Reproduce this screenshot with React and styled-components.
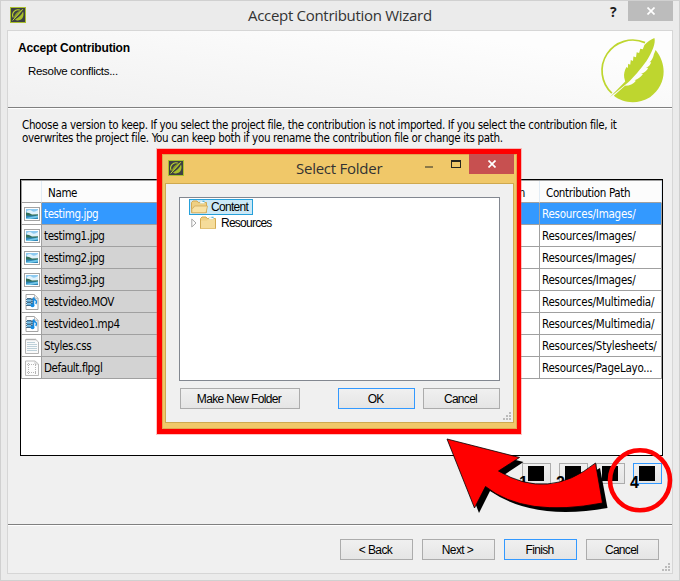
import React from "react";
import styled, { createGlobalStyle, css } from "styled-components";

const GlobalStyle = createGlobalStyle`
  * { box-sizing: border-box; }
  body { margin: 0; }
`;

const tahoma = css`
  font-family: "DejaVu Sans Condensed", "DejaVu Sans", sans-serif;
  font-stretch: condensed;
  font-size: 11.5px;
`;

const Window = styled.div`
  position: relative;
  display: flex;
  flex-direction: column;
  width: 680px;
  height: 581px;
  padding: 0 6px 6px;
  border: 1px solid #d0d0d0;
  background: #ebebeb;
  overflow: hidden;
  white-space: nowrap;
  color: #000;
  ${tahoma}
`;

const TitleBar = styled.header`
  display: flex;
  align-items: flex-start;
  flex: none;
  height: ${(p) => p.$height}px;
`;

const TitleIcon = styled.div`
  flex: none;
  width: 16px;
  height: 16px;
  margin: ${(p) => p.$top}px 0 0 3px;
`;

const Title = styled.h1`
  flex: 1;
  margin: ${(p) => p.$top}px 0 0;
  padding-left: ${(p) => p.$indent}px;
  font: 400 15px/20px "Open Sans", "Noto Sans", sans-serif;
  letter-spacing: ${(p) => p.$spacing}px;
  color: #333;
`;

const HelpMark = styled.span`
  width: 10px;
  margin: 2px 8px 0 0;
  font: 700 14px/18px "Open Sans", sans-serif;
  color: #1c1c1c;
`;

const CloseButton = styled.button`
  display: flex;
  align-items: center;
  justify-content: center;
  width: 45px;
  height: 20px;
  padding: 0 0 0 1px;
  border: 0;
  background: ${(p) => p.$color};
`;

const Client = styled.main`
  display: flex;
  flex-direction: column;
  flex: 1;
  border: 1px solid #d6d6d6;
  background: #f0f0f0;
`;

const Header = styled.section`
  display: flex;
  justify-content: space-between;
  flex: none;
  height: 77px;
  padding: 6px 7px 0 10px;
  border-bottom: 1px solid #808080;
  background: linear-gradient(172deg, #fdfdfd 0%, #f0f0f0 100%);
  background: linear-gradient(188deg, #fdfdfd 20%, #f0f0f0 100%);
`;

const HeaderText = styled.div`
  display: flex;
  flex-direction: column;
`;

const Heading = styled.h2`
  margin: 2px 0 0;
  font: 700 12px/18px "Liberation Sans", sans-serif;
  letter-spacing: -0.18px;
`;

const Subheading = styled.p`
  margin: 5px 0 0 10px;
  font: 400 11.5px/18px "Liberation Sans", sans-serif;
  letter-spacing: -0.3px;
`;

const Intro = styled.p`
  flex: none;
  height: 71px;
  margin: 0;
  padding: 10px 0 0 14px;
  border-top: 1px solid #fff;
  line-height: 13px;
  letter-spacing: ${(p) => p.$spacing}px;
`;

const FileTable = styled.div`
  flex: none;
  width: 643px;
  height: 277px;
  margin-left: 12px;
  border: 1px solid #000;
  background: #fff;
`;

const Grid = styled.div`
  display: grid;
  border-top: 1px solid #a0a0a0;
  border-left: 1px solid #a0a0a0;
`;

const GridRow = styled.div`
  display: grid;
  grid-template-columns: 20px 318px 180px 122px;
  height: 22px;
  color: ${(p) => (p.$selected ? "#fff" : "#000")};
  background: ${(p) => (p.$selected ? "#3399ff" : "#fff")};
`;

const Cell = styled.div`
  display: flex;
  align-items: center;
  padding: 1px 0 0 ${(p) => p.$pad ?? 2}px;
  border-right: 1px solid #a0a0a0;
  border-bottom: 1px solid #a0a0a0;
  background: ${(p) => p.$bg || "transparent"};
  letter-spacing: ${(p) => p.$spacing || 0}px;
`;

const HeadCell = styled(Cell)`
  padding: 2px ${(p) => (p.$end ? 14 : 0)}px 0 6px;
  justify-content: ${(p) => (p.$end ? "flex-end" : "flex-start")};
  border-right-color: #e2ecf5;
  background: #fcfcfc;
  letter-spacing: -0.35px;
`;

const IconCell = styled(Cell)`
  padding: 0;
  justify-content: center;
  background: #fff;
`;

const Steps = styled.div`
  display: flex;
  flex: none;
  gap: 8px;
  height: 68px;
  padding: 7px 0 0 514px;
`;

const Step = styled.div`
  position: relative;
  width: 29px;
  height: 21px;
  padding: 2px 0 0 5px;
  border: 1px solid ${(p) => (p.$active ? "#3399ff" : "#acacac")};
  background: linear-gradient(#f0f0f0, #e5e5e5);
`;

const StepSwatch = styled.div`
  width: 16px;
  height: 15px;
  background: #000;
`;

const StepNumber = styled.span`
  position: absolute;
  left: -4px;
  top: 10px;
  font: 700 16px/18px "Liberation Sans", sans-serif;
`;

const Footer = styled.footer`
  display: flex;
  align-items: flex-start;
  flex: 1;
  gap: 9px;
  padding: 14px 0 0 332px;
  border-top: 1px solid #808080;
  box-shadow: inset 0 1px #fff;
`;

const Button = styled.button`
  width: ${(p) => p.$width}px;
  height: 21px;
  padding: 1px 2px 0 0;
  border: 1px solid ${(p) => (p.$primary ? "#3399ff" : "#acacac")};
  background: linear-gradient(#f0f0f0, #e5e5e5);
  color: #000;
  font: 400 12px/17px "Liberation Sans", sans-serif;
  letter-spacing: ${(p) => p.$spacing || 0}px;
`;

const GripSvg = styled.svg`
  position: absolute;
  right: ${(p) => p.$right}px;
  bottom: ${(p) => p.$bottom}px;
`;

const Dialog = styled.section`
  position: absolute;
  left: 156px;
  top: 148px;
  display: flex;
  flex-direction: column;
  width: 364px;
  height: 285px;
  padding: 0 3px 8px;
  border: 5px solid #ff0000;
  border-right-width: 4px;
  outline: 1px solid rgba(255, 80, 80, 0.35);
  background: #f0c869;
  box-shadow: inset 0 0 0 1px #e2a552;
`;

const DialogBody = styled.div`
  position: relative;
  display: flex;
  flex-direction: column;
  flex: 1;
  padding: 13px;
  border: 1px solid #cfa94f;
  background: #f0f0f0;
`;

const WindowButtons = styled.div`
  display: flex;
  align-items: flex-start;
`;

const Tree = styled.ul`
  flex: none;
  width: 321px;
  height: 184px;
  margin: 0;
  padding: 1px 0 0 9px;
  border: 1px solid #828790;
  background: #fff;
  list-style: none;
  font: 400 12px/14px "Liberation Sans", sans-serif;
`;

const TreeItem = styled.li`
  display: flex;
  align-items: center;
  width: ${(p) => (p.$open ? "64px" : "max-content")};
  height: 16px;
  gap: ${(p) => (p.$open ? 3 : 1)}px;
  padding: 0 3px 0 1px;
  border: 1px solid ${(p) => (p.$open ? "#26a0da" : "transparent")};
  background: ${(p) => (p.$open ? "#cbe8f6" : "transparent")};
`;

const TreeLabel = styled.span`
  margin-left: ${(p) => p.$gap || 0}px;
  letter-spacing: ${(p) => p.$spacing}px;
`;

const DialogActions = styled.div`
  display: flex;
  justify-content: space-between;
  padding: 7px 0 0 1px;
`;

const ButtonPair = styled.div`
  display: flex;
  gap: 8px;
`;

const Callout = styled.svg`
  position: absolute;
  left: 429px;
  top: 419px;
  pointer-events: none;
`;

function AppIcon() {
  return (
    <svg width="16" height="16" viewBox="0 0 16 16">
      <rect x=".5" y=".5" width="15" height="15" fill="#3d4043" stroke="#a9bf2c" />
      <path d="M9.8 3.1A5.3 5.3 0 0 0 3.3 10.6" fill="none" stroke="#bed62f" strokeWidth="1.1" />
      <path d="M4 10.8C4 8 7 4.5 12.5 2.2 11 6 7.5 9.6 4.6 11Z" fill="#8a9b2e" />
      <path d="M13 4.6C14.4 8 13 13.3 8 13.5 6.8 13.5 5.7 13.1 5 12.5 9 10.5 11.5 8 13 4.6Z" fill="#a9bf2c" />
      <path d="M3.6 13.6 13.3 3" stroke="#3d4043" strokeWidth=".8" />
      <path d="M2.6 13.5 12.9 2.2" stroke="#bed62f" strokeWidth="1" />
    </svg>
  );
}

function FeatherLogo() {
  return (
    <svg width="66" height="68" viewBox="0 0 66 68">
      <path d="M46 5.6A30.7 30.7 0 0 0 12.8 56.2" fill="none" stroke="#bed62f" strokeWidth="1.7" />
      <path
        d="M56.6 13C69 28 67 49 51 60.2 38 68 24 66 14.8 58.8L26 48.8C31 48.8 34 47 37 43.8L35.5 43.3C39 42.5 42 39.5 44 37L42 36.9C46 35.5 48 33.5 49.2 30.8L47 31.1C50 29.5 51.5 27.5 52.2 25L50.5 25.4C53.5 22.5 54.6 19 54.8 17.5Z"
        fill="#bed62f"
      />
      <path
        d="M55.4 1C57 6 53 15.5 47.5 24 41 33 34 41 29 45.5L10.8 60.3 26.2 44.4 25.2 40.4C24.6 37 25.6 33.5 27.5 30L28.8 31 29.2 26.8 31.2 27.8 31.8 23.1 34 24 34.4 19.4 37 20.2 37.7 15.3 40.1 16.1 41.3 11.7 43.8 12.3 45.4 8.1C48.5 4.5 52 2.3 55.4 1Z"
        fill="#bed62f"
      />
    </svg>
  );
}

function CrossIcon() {
  return (
    <svg width="8" height="8" viewBox="0 0 8 8">
      <path d="M.5.5 7.5 7.5M7.5.5.5 7.5" stroke="#fff" strokeWidth="1.7" />
    </svg>
  );
}

function ImageIcon() {
  return (
    <svg width="16" height="14" viewBox="0 0 16 14">
      <rect x=".5" y=".5" width="15" height="13" fill="#fff" stroke="#a4a4a4" />
      <path d="M2 2h12v5H2z" fill="#8dcaf1" />
      <path d="M3 4q3-2 5 0t6-1v4H3z" fill="#dff2fc" />
      <path d="M2 5.5Q5 5.6 8 7.6L14 7.2V9H2z" fill="#316f59" />
      <path d="M2 8.6h12V12H2z" fill="#2f86b8" />
      <path d="M2 11 14 8.6v2L6 12H2z" fill="#74c8e9" />
    </svg>
  );
}

function MediaIcon() {
  return (
    <svg width="14" height="16" viewBox="0 0 14 16">
      <path d="M1 .5h8.5l3.5 3.5v11.5H1z" fill="#fff" stroke="#a4a4a4" />
      <path d="M9.5.5v3.8h3.6" fill="#eee" stroke="#bbb" />
      <path d="M1 4h7v8H1z" fill="#456d8b" />
      <path d="M2 5.5h4v2H2zM2 9h4v1.8H2z" fill="#79c5ed" />
      <path d="M1.5 4v8M7 4v8" stroke="#d9e8ef" strokeDasharray="1 1" />
      <path d="M8.5 11V3.5Q9 6 11 6.4 12 8 10.8 10" fill="none" stroke="#168be0" strokeWidth="1.5" />
      <ellipse cx="7.5" cy="11.5" rx="2" ry="1.8" fill="#168be0" />
    </svg>
  );
}

function SheetIcon() {
  return (
    <svg width="14" height="16" viewBox="0 0 14 16">
      <path d="M.5 1.5h10.3L13.5 4v11.5H.5z" fill="#fafafa" stroke="#b5b5b5" />
      <path d="M2 .5v2M4 .5v2M6 .5v2M8 .5v2M10 .5v2" stroke="#aaa" strokeWidth=".8" />
      <path d="M2 4.5h8M2 6.5h10M2 8.5h10M2 10.5h10M2 12.5h10" stroke="#bdd0d9" />
    </svg>
  );
}

function LayoutIcon() {
  return (
    <svg width="14" height="16" viewBox="0 0 14 16">
      <path d="M.5 1h9.5L13.5 4v11.5H.5z" fill="#fcfcfc" stroke="#bababa" />
      <path d="M10 1v3h3" fill="none" stroke="#c8c8c8" />
      <path d="M3.5 3v11M10.5 5v9M2 4.5h9M2 12.5h10" stroke="#b5b5b5" strokeDasharray="1 1" />
    </svg>
  );
}

function FolderIcon({ open }) {
  return (
    <svg width="17" height="14" viewBox="0 0 17 14">
      <path d="M.5 12.5V2.5L2 1h4l1.3 1.5H15.5v10z" fill="#efd083" stroke="#d3aa52" />
      <path d="M9 1.3h4.5v2H9z" fill="#fff" stroke="#b8d7cc" strokeWidth=".5" />
      <path d="M11.5 1.3h2" stroke="#36a6dc" />
      {open ? (
        <path d="M3.5 6h13L15 12.8H.8V8.5l1.5-.5z" fill="#f8e2a5" stroke="#cfaa5c" strokeWidth=".8" />
      ) : (
        <path d="M1 4.5h6l1-1H15v9H1z" fill="#f5dc9a" />
      )}
    </svg>
  );
}

function Grip({ right, bottom }) {
  return (
    <GripSvg $right={right} $bottom={bottom} width="8" height="8" viewBox="0 0 8 8" fill="#bcbcbc">
      <path d="M6 0h2v2H6zM3 3h2v2H3zM6 3h2v2H6zM0 6h2v2H0zM3 6h2v2H3zM6 6h2v2H6z" />
    </GripSvg>
  );
}

const files = [
  { icon: ImageIcon, name: "testimg.jpg", path: "Resources/Images/", selected: true },
  { icon: ImageIcon, name: "testimg1.jpg", path: "Resources/Images/" },
  { icon: ImageIcon, name: "testimg2.jpg", path: "Resources/Images/" },
  { icon: ImageIcon, name: "testimg3.jpg", path: "Resources/Images/" },
  { icon: MediaIcon, name: "testvideo.MOV", path: "Resources/Multimedia/" },
  { icon: MediaIcon, name: "testvideo1.mp4", path: "Resources/Multimedia/" },
  { icon: SheetIcon, name: "Styles.css", path: "Resources/Stylesheets/" },
  { icon: LayoutIcon, name: "Default.flpgl", path: "Resources/PageLayo..." },
];

function SelectFolderDialog() {
  return (
    <Dialog>
      <TitleBar $height={29}>
        <TitleIcon $top={6}><AppIcon /></TitleIcon>
        <Title $top={4} $indent={112} $spacing={-0.25}>Select Folder</Title>
        <WindowButtons>
          <svg width="44" height="20" viewBox="0 0 44 20">
            <path d="M0 12h8v2H0z" fill="#8b7847" />
            <path d="M26 6h10v8H26zM27 8v5h8V8z" fill="#27261e" fillRule="evenodd" />
          </svg>
          <CloseButton $color="#c75050" aria-label="Close folder dialog"><CrossIcon /></CloseButton>
        </WindowButtons>
      </TitleBar>
      <DialogBody>
        <Tree>
          <TreeItem $open>
            <FolderIcon open />
            <TreeLabel $spacing={-0.7}>Content</TreeLabel>
          </TreeItem>
          <TreeItem>
            <svg width="8" height="10" viewBox="0 0 8 10">
              <path d="M.8 1v8L5 5z" fill="#fff" stroke="#a6a6a6" />
            </svg>
            <FolderIcon />
            <TreeLabel $gap={3} $spacing={-0.75}>Resources</TreeLabel>
          </TreeItem>
        </Tree>
        <DialogActions>
          <Button $width={120} $spacing={-0.65}>Make New Folder</Button>
          <ButtonPair>
            <Button $width={77} $primary $spacing={-0.8}>OK</Button>
            <Button $width={77} $spacing={-0.7}>Cancel</Button>
          </ButtonPair>
        </DialogActions>
        <Grip right={2} bottom={2} />
      </DialogBody>
    </Dialog>
  );
}

export default function App() {
  return (
    <>
      <GlobalStyle />
      <Window>
        <TitleBar $height={29}>
          <TitleIcon $top={6}><AppIcon /></TitleIcon>
          <Title $top={4} $indent={222} $spacing={-0.3}>Accept Contribution Wizard</Title>
          <HelpMark>?</HelpMark>
          <CloseButton $color="#bcbcbc" aria-label="Close wizard"><CrossIcon /></CloseButton>
        </TitleBar>
        <Client>
          <Header>
            <HeaderText>
              <Heading>Accept Contribution</Heading>
              <Subheading>Resolve conflicts...</Subheading>
            </HeaderText>
            <FeatherLogo />
          </Header>
          <Intro $spacing={-0.34}>
            Choose a version to keep. If you select the project file, the contribution is not imported. If you select the contribution file, it
            <br />
            overwrites the project file. You can keep both if you rename the contribution file or change its path.
          </Intro>
          <FileTable>
            <Grid>
              <GridRow>
                <HeadCell />
                <HeadCell>Name</HeadCell>
                <HeadCell $end>Action</HeadCell>
                <HeadCell>Contribution Path</HeadCell>
              </GridRow>
              {files.map(({ icon: Icon, name, path, selected }) => (
                <GridRow key={name} $selected={selected}>
                  <IconCell><Icon /></IconCell>
                  <Cell $spacing={-0.4} $bg={selected ? "#3399ff" : "#d3d3d3"}>{name}</Cell>
                  <Cell />
                  <Cell $spacing={-0.24}>{path}</Cell>
                </GridRow>
              ))}
            </Grid>
          </FileTable>
          <Steps>
            {[1, 2, 3, 4].map((n) => (
              <Step key={n} $active={n === 4}>
                <StepSwatch />
                <StepNumber>{n}</StepNumber>
              </Step>
            ))}
          </Steps>
          <Footer>
            <Button $width={73} $spacing={-0.6}>&lt; Back</Button>
            <Button $width={73} $spacing={-0.6}>Next &gt;</Button>
            <Button $width={73} $primary $spacing={-0.7}>Finish</Button>
            <Button $width={73} $spacing={-0.7}>Cancel</Button>
          </Footer>
        </Client>
        <Grip right={9} bottom={9} />
        <SelectFolderDialog />
        <Callout width="250" height="100" viewBox="430 420 250 100">
          <path d="M452 443 523.5 462 504 475Q550 497 600 468L607.5 508Q534 521 490 491L479 513Z" fill="#000" />
          <path
            d="M447 439 519.5 457.5 498.5 471Q548 501 595.5 463L602.5 503Q525 518 485.5 486.5L474.5 508Z"
            fill="#f00"
            stroke="#000"
            strokeWidth=".8"
          />
          <circle cx="640" cy="480.3" r="30" fill="none" stroke="#f00" strokeWidth="4.6" />
        </Callout>
      </Window>
    </>
  );
}
